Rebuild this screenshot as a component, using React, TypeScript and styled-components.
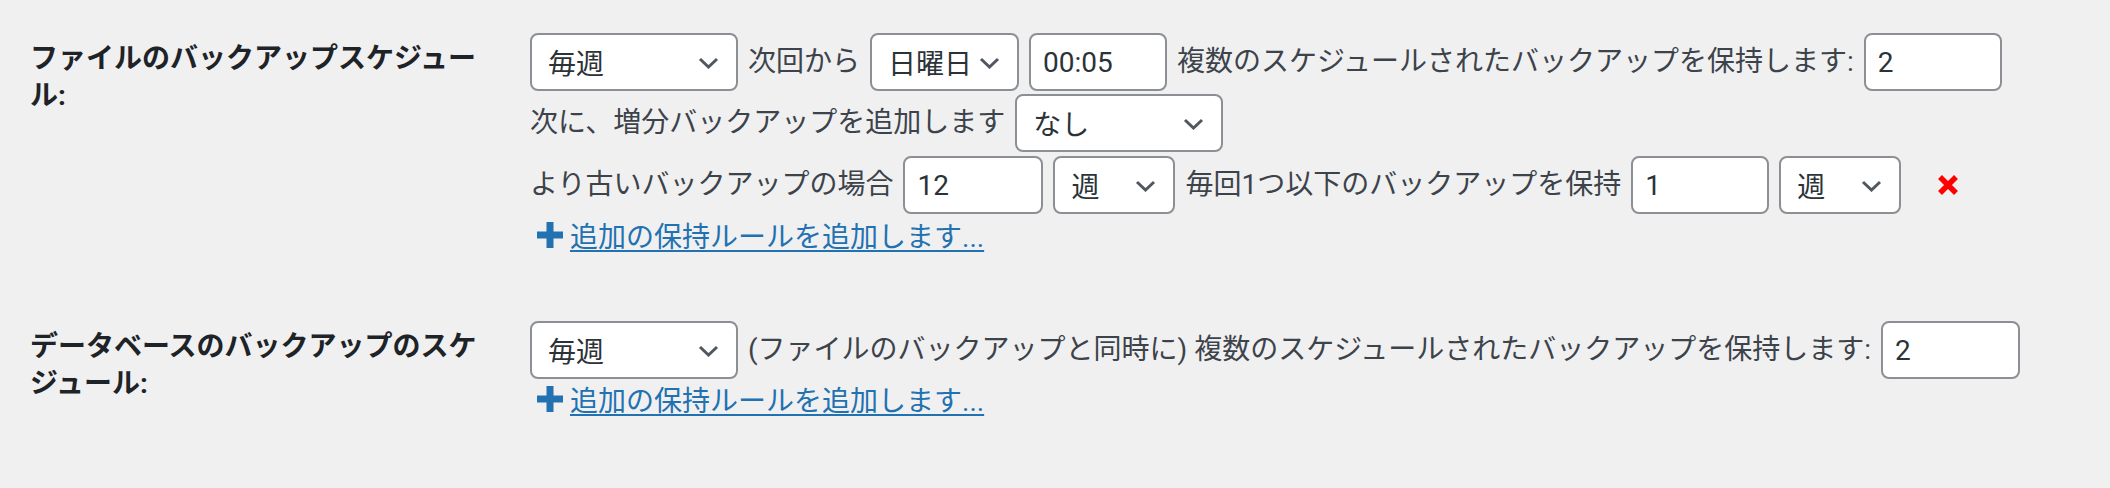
import styled, { createGlobalStyle } from 'styled-components';

const GlobalStyle = createGlobalStyle`
  html, body {
    margin: 0;
    padding: 0;
    background: #f0f0f1;
  }
  body {
    font-family: Roboto, "Noto Sans CJK JP", sans-serif;
    font-size: 28px;
    color: #3c434a;
  }
`;

const FormTable = styled.div`
  display: grid;
  grid-template-columns: 530px 1fr;
`;

const Label = styled.div`
  padding: 40px 40px 0 30px;
  font-weight: 700;
  font-size: 28px;
  line-height: 37px;
  color: #1d2327;
  line-break: strict;
`;

const Value = styled.div<{ $bottom: number }>`
  display: flex;
  flex-direction: column;
  padding: 31px 0 ${({ $bottom }) => $bottom}px 0;
`;

const Line = styled.div<{ $h: number }>`
  display: flex;
  align-items: center;
  gap: 10px;
  height: ${({ $h }) => $h}px;
  white-space: nowrap;
`;

const Text = styled.span`
  line-height: 1.3;
`;

const SelectBox = styled.div<{ $w: number }>`
  box-sizing: border-box;
  width: ${({ $w }) => $w}px;
  height: 58px;
  display: flex;
  align-items: center;
  justify-content: space-between;
  padding: 0 17px 0 16px;
  background: #fff;
  border: 2px solid #8c8f94;
  border-radius: 8px;
  color: #2c3338;
  cursor: pointer;
  flex-shrink: 0;

  svg {
    margin-top: 2px;
  }
`;

const Input = styled.input<{ $w: number }>`
  box-sizing: border-box;
  width: ${({ $w }) => $w}px;
  height: 58px;
  padding: 0 12px;
  background: #fff;
  border: 2px solid #8c8f94;
  border-radius: 8px;
  font-family: Roboto, "Noto Sans CJK JP", sans-serif;
  font-size: 28px;
  color: #2c3338;
  flex-shrink: 0;
  outline: none;
`;

const AddLink = styled.a`
  display: flex;
  align-items: center;
  gap: 7px;
  margin-left: 7px;
  color: #2271b1;
  font-size: 28px;
  cursor: pointer;

  span {
    text-decoration: underline;
    text-decoration-thickness: 2px;
    text-underline-offset: 3px;
  }
`;

const Remove = styled.span`
  display: flex;
  margin-left: 26px;
  cursor: pointer;
`;

const Chevron = () => (
  <svg width='21' height='12' viewBox='0 0 21 12'>
    <path d='M2 2 L10.5 10 L19 2' fill='none' stroke='#50575e' strokeWidth='3' />
  </svg>
);

const Select = ({ w, value }: { w: number; value: string }) => (
  <SelectBox $w={w}>
    <span>{value}</span>
    <Chevron />
  </SelectBox>
);

const Plus = () => (
  <svg width='26' height='26' viewBox='0 0 26 26'>
    <rect x='9.5' y='0' width='7' height='26' fill='#2271b1' />
    <rect x='0' y='9.5' width='26' height='7' fill='#2271b1' />
  </svg>
);

const RedX = () => (
  <svg width='22' height='22' viewBox='0 0 22 22'>
    <path d='M3 3 L19 19 M19 3 L3 19' stroke='#ff0000' strokeWidth='5.5' />
  </svg>
);

const AddRule = () => (
  <AddLink>
    <Plus />
    <span>追加の保持ルールを追加します...</span>
  </AddLink>
);

export default function App() {
  return (
    <>
      <GlobalStyle />
      <FormTable>
        <Label>ファイルのバックアップスケジュール:</Label>
        <Value $bottom={35}>
          <Line $h={62}>
            <Select w={208} value='毎週' />
            <Text>次回から</Text>
            <Select w={149} value='日曜日' />
            <Input $w={138} defaultValue='00:05' />
            <Text>複数のスケジュールされたバックアップを保持します:</Text>
            <Input $w={138} defaultValue='2' />
          </Line>
          <Line $h={60}>
            <Text>次に、増分バックアップを追加します</Text>
            <Select w={208} value='なし' />
          </Line>
          <Line $h={64}>
            <Text>より古いバックアップの場合</Text>
            <Input $w={140} defaultValue='12' />
            <Select w={122} value='週' />
            <Text>毎回1つ以下のバックアップを保持</Text>
            <Input $w={138} defaultValue='1' />
            <Select w={122} value='週' />
            <Remove>
              <RedX />
            </Remove>
          </Line>
          <Line $h={36}>
            <AddRule />
          </Line>
        </Value>

        <Label>データベースのバックアップのスケジュール:</Label>
        <Value $bottom={0}>
          <Line $h={62}>
            <Select w={208} value='毎週' />
            <Text>(ファイルのバックアップと同時に) 複数のスケジュールされたバックアップを保持します:</Text>
            <Input $w={139} defaultValue='2' />
          </Line>
          <Line $h={36}>
            <AddRule />
          </Line>
        </Value>
      </FormTable>
    </>
  );
}
